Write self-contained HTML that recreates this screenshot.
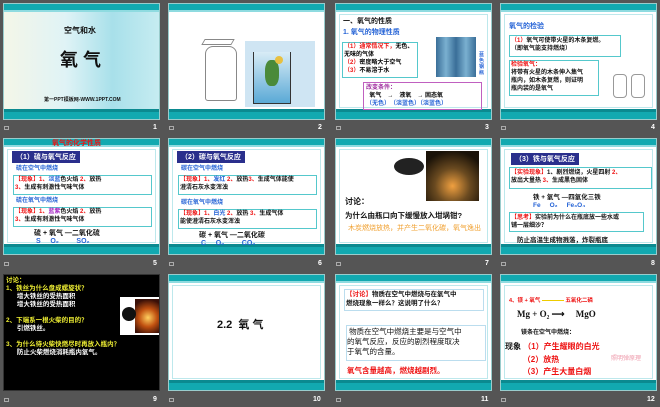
<!DOCTYPE html>
<html><head><meta charset="utf-8"><style>
*{margin:0;padding:0;box-sizing:border-box}
body{width:660px;height:407px;background:#555;position:relative;overflow:hidden;font-family:"Liberation Sans","Noto Sans CJK SC",sans-serif}
.s{position:absolute;width:157px;height:117px;background:#fff;overflow:hidden;border:1px solid #9cc}
.tb{position:absolute;left:0;right:0;top:0;height:8px;background:#12a9b0;border-bottom:2px solid #8fdbe0}
.bb{position:absolute;left:0;right:0;bottom:0;height:10px;background:#12a9b0;border-top:3px solid #0b8a90}
.in{position:absolute;left:3px;right:3px;top:10px;bottom:11px;border:1px solid #bde8ec}
.n{position:absolute;color:#fff;font-size:7px;font-weight:bold}
.ic{position:absolute;width:5px;height:4px;border:1px solid #aaa}
.t{position:absolute;font-size:7px;line-height:9px;font-weight:bold;white-space:nowrap}
.bx{position:absolute;border:1px solid #55c8cc}
.r{color:#e11}.b{color:#2563d6}.k{color:#111}
.hd{position:absolute;background:#2a2f8c;color:#fff;font-size:7px;font-weight:bold;padding:1px 4px}
</style></head><body>

<!-- slide 1 -->
<div class="s" style="left:3px;top:3px;background:linear-gradient(90deg,#f4f6e8,#dff3f6 40%,#a8e0ea 70%,#c6ecf1)">
<div class="tb"></div><div class="bb"></div>
<div class="t k" style="left:60px;top:22px;font-size:8px">空气和水</div>
<div class="t k" style="left:56px;top:46px;font-size:18px;line-height:20px">氧 气</div>
<div class="t k" style="left:40px;top:92px;font-size:5px">第一PPT模板网-WWW.1PPT.COM</div>
</div>
<div class="ic" style="left:4px;top:126px"></div><div class="n" style="left:153px;top:124px">1</div>

<!-- slide 2 -->
<div class="s" style="left:168px;top:3px">
<div class="tb"></div><div class="bb"></div>
<div style="position:absolute;left:36px;top:42px;width:32px;height:55px;border:1px solid #888;border-radius:8px 8px 3px 3px"></div>
<div style="position:absolute;left:34px;top:35px;width:30px;height:6px;border:1px solid #888;transform:skewX(-30deg)"></div>
<div style="position:absolute;left:76px;top:37px;width:70px;height:66px;background:#cfe5f3"></div>
<div style="position:absolute;left:84px;top:48px;width:38px;height:52px;background:linear-gradient(#d8ecf6,#5aa9d6);border:1px solid #333;border-top:none"></div>
<div style="position:absolute;left:96px;top:56px;width:14px;height:26px;background:#4a8a3a;border-radius:40%"></div>
<div style="position:absolute;left:106px;top:52px;width:8px;height:8px;background:#e8c040;border-radius:50%"></div>
</div>
<div class="ic" style="left:169px;top:126px"></div><div class="n" style="left:318px;top:124px">2</div>

<!-- slide 3 -->
<div class="s" style="left:335px;top:3px">
<div class="tb"></div><div class="bb"></div><div class="in"></div>
<div class="t k" style="left:7px;top:13px">一、氧气的性质</div>
<div class="t b" style="left:7px;top:24px">1. 氧气的物理性质</div>
<div class="bx" style="left:6px;top:38px;width:76px;height:36px"></div>
<div class="t" style="left:8px;top:39px;font-size:6px;line-height:8px"><span class="r">（1）通常情况下，</span>无色、<br>无味的气体<br><span class="r">（2）</span>密度略大于空气<br><span class="r">（3）</span>不易溶于水</div>
<div style="position:absolute;left:100px;top:33px;width:40px;height:40px;background:linear-gradient(90deg,#3a6e98,#7ab0d0,#3a6e98,#7ab0d0,#3a6e98)"></div>
<div class="t b" style="left:143px;top:48px;font-size:5px;line-height:6px">蓝<br>色<br>钢<br>瓶</div>
<div class="bx" style="left:27px;top:78px;width:119px;height:28px;border-color:#c060c0"></div>
<div class="t" style="left:30px;top:80px;font-size:6px;line-height:8px"><span style="color:#a030a0">改变条件：</span><br>&nbsp;&nbsp;氧气　→　液氧　→ 固态氧<br><span class="b">（无色）　（淡蓝色）（淡蓝色）</span></div>
</div>
<div class="ic" style="left:336px;top:126px"></div><div class="n" style="left:485px;top:124px">3</div>

<!-- slide 4 -->
<div class="s" style="left:500px;top:3px">
<div class="tb"></div><div class="bb"></div><div class="in"></div>
<div class="t b" style="left:8px;top:18px;font-size:7px">氧气的检验</div>
<div class="bx" style="left:8px;top:31px;width:112px;height:22px"></div>
<div class="t k" style="left:10px;top:33px;font-size:6px;line-height:8px"><span class="r">（1）</span>氧气可使带火星的木条复燃。<br>（即氧气能支持燃烧）</div>
<div class="bx" style="left:8px;top:56px;width:90px;height:36px"></div>
<div class="t k" style="left:10px;top:57px;font-size:6px;line-height:8px"><span class="r">检验氧气：</span><br>将带有火星的木条伸入集气<br>瓶内，如木条复燃，则证明<br>瓶内装的是氧气</div>
<div style="position:absolute;left:112px;top:70px;width:14px;height:24px;border:1px solid #999;border-radius:4px"></div>
<div style="position:absolute;left:130px;top:70px;width:14px;height:24px;border:1px solid #999;border-radius:4px"></div>
</div>
<div class="ic" style="left:501px;top:126px"></div><div class="n" style="left:651px;top:124px">4</div>

<!-- slide 5 -->
<div class="s" style="left:3px;top:138px">
<div class="tb"></div><div class="bb"></div><div class="in"></div>
<div class="t r" style="left:48px;top:0px;font-size:7px">氧气的化学性质</div>
<div class="hd" style="left:8px;top:12px">（1）硫与氧气反应</div>
<div class="t b" style="left:12px;top:26px;font-size:6px">硫在空气中燃烧</div>
<div class="bx" style="left:9px;top:36px;width:139px;height:20px"></div>
<div class="t k" style="left:11px;top:37px;font-size:6px;line-height:8px"><span class="r">【现象】1、</span><span class="b">淡蓝</span>色火焰 <span class="r">2、</span>放热<br><span class="r">3、</span>生成有刺激性气味气体</div>
<div class="t b" style="left:12px;top:58px;font-size:6px">硫在氧气中燃烧</div>
<div class="bx" style="left:9px;top:68px;width:139px;height:20px"></div>
<div class="t k" style="left:11px;top:69px;font-size:6px;line-height:8px"><span class="r">【现象】1、</span><span style="color:#a020c0">蓝紫</span>色火焰 <span class="r">2、</span>放热<br><span class="r">3、</span>生成有刺激性气味气体</div>
<div class="t k" style="left:30px;top:91px;font-size:7px;line-height:8px">硫 + 氧气 ―二氧化硫<br><span class="b">&nbsp;S&nbsp;&nbsp;&nbsp;&nbsp;&nbsp;O₂&nbsp;&nbsp;&nbsp;&nbsp;&nbsp;&nbsp;&nbsp;&nbsp;&nbsp;SO₂</span></div>
</div>
<div class="ic" style="left:4px;top:262px"></div><div class="n" style="left:153px;top:260px">5</div>

<!-- slide 6 -->
<div class="s" style="left:168px;top:138px">
<div class="tb"></div><div class="bb"></div><div class="in"></div>
<div class="hd" style="left:8px;top:12px">（2）碳与氧气反应</div>
<div class="t b" style="left:12px;top:26px;font-size:6px">碳在空气中燃烧</div>
<div class="bx" style="left:9px;top:36px;width:139px;height:20px"></div>
<div class="t k" style="left:11px;top:37px;font-size:6px;line-height:8px"><span class="r">【现象】1、</span><span class="b">发红</span> <span class="r">2、</span>放热<span class="r">3、</span>生成气体能使<br>澄清石灰水变浑浊</div>
<div class="t b" style="left:12px;top:60px;font-size:6px">碳在氧气中燃烧</div>
<div class="bx" style="left:9px;top:70px;width:139px;height:20px"></div>
<div class="t k" style="left:11px;top:71px;font-size:6px;line-height:8px"><span class="r">【现象】1、</span><span class="b">白光</span> <span class="r">2、</span>放热 <span class="r">3、</span>生成气体<br>能使澄清石灰水变浑浊</div>
<div class="t k" style="left:30px;top:93px;font-size:7px;line-height:8px">碳 + 氧气 ―二氧化碳<br><span class="b">&nbsp;C&nbsp;&nbsp;&nbsp;&nbsp;&nbsp;O₂&nbsp;&nbsp;&nbsp;&nbsp;&nbsp;&nbsp;&nbsp;&nbsp;&nbsp;CO₂</span></div>
</div>
<div class="ic" style="left:169px;top:262px"></div><div class="n" style="left:318px;top:260px">6</div>

<!-- slide 7 -->
<div class="s" style="left:335px;top:138px">
<div class="tb"></div><div class="bb"></div><div class="in"></div>
<div style="position:absolute;left:58px;top:19px;width:30px;height:17px;border-radius:50%;background:#222"></div>
<div style="position:absolute;left:90px;top:12px;width:53px;height:50px;background:radial-gradient(circle at 50% 70%,#f0a040,#6a4a20 40%,#1a1208 80%)"></div>
<div class="t k" style="left:9px;top:58px;font-size:8px">讨论：</div>
<div class="t k" style="left:9px;top:72px;font-size:7.5px">为什么由瓶口向下缓慢放入坩埚钳?</div>
<div class="t" style="left:12px;top:85px;font-size:7px;color:#f0a030;font-weight:normal">木炭燃烧放热，并产生二氧化碳，氧气逸出</div>
</div>
<div class="ic" style="left:336px;top:262px"></div><div class="n" style="left:485px;top:260px">7</div>

<!-- slide 8 -->
<div class="s" style="left:500px;top:138px">
<div class="tb"></div><div class="bb"></div><div class="in"></div>
<div class="hd" style="left:10px;top:14px">（3）铁与氧气反应</div>
<div class="bx" style="left:8px;top:28px;width:143px;height:22px"></div>
<div class="t k" style="left:10px;top:30px;font-size:6px;line-height:8px"><span class="r">【实验现象】</span>1、剧烈燃烧，火星四射 <span class="r">2、</span><br>放出大量热 <span class="r">3、</span>生成黑色固体</div>
<div class="t k" style="left:32px;top:55px;font-size:6.5px;line-height:8px">铁 + 氧气 ―四氧化三铁<br><span class="b">Fe&nbsp;&nbsp;&nbsp;&nbsp;&nbsp;O₂&nbsp;&nbsp;&nbsp;&nbsp;&nbsp;Fe₃O₄</span></div>
<div class="bx" style="left:8px;top:73px;width:135px;height:20px"></div>
<div class="t k" style="left:10px;top:75px;font-size:6px;line-height:8px"><span class="r">【思考】</span>实验前为什么在瓶底放一些水或<br>铺一层细沙？</div>
<div class="t k" style="left:16px;top:97px;font-size:6.5px">防止高温生成物溅落，炸裂瓶底</div>
</div>
<div class="ic" style="left:501px;top:262px"></div><div class="n" style="left:651px;top:260px">8</div>

<!-- slide 9 -->
<div class="s" style="left:3px;top:274px;background:#000;border-color:#333">
<div class="t" style="left:2px;top:2px;font-size:6.5px;line-height:8px;color:#ee3"><span>讨论：</span><br>1、铁丝为什么盘成螺旋状？<br><span style="color:#fff">&nbsp;&nbsp;&nbsp;&nbsp;&nbsp;&nbsp;增大铁丝的受热面积<br>&nbsp;&nbsp;&nbsp;&nbsp;&nbsp;&nbsp;增大铁丝的受热面积</span><br><br>2、下端系一根火柴的目的？<br><span style="color:#fff">&nbsp;&nbsp;&nbsp;&nbsp;&nbsp;&nbsp;引燃铁丝。</span><br><br>3、为什么待火柴快燃尽时再放入瓶内？<br><span style="color:#fff">&nbsp;&nbsp;&nbsp;&nbsp;&nbsp;&nbsp;防止火柴燃烧消耗瓶内氧气。</span></div>
<div style="position:absolute;left:116px;top:22px;width:43px;height:38px;background:#fff"></div>
<div style="position:absolute;left:131px;top:24px;width:26px;height:34px;background:radial-gradient(circle at 50% 55%,#ffd060,#c05010 40%,#3a1008 80%)"></div>
<div style="position:absolute;left:118px;top:32px;width:14px;height:14px;border-radius:50%;background:#111"></div>
</div>
<div class="ic" style="left:4px;top:398px"></div><div class="n" style="left:153px;top:396px">9</div>

<!-- slide 10 -->
<div class="s" style="left:168px;top:274px">
<div class="tb"></div><div class="bb"></div><div class="in"></div>
<div class="t k" style="left:48px;top:44px;font-size:11px;line-height:13px">2.2 &nbsp;氧 气</div>
</div>
<div class="ic" style="left:169px;top:398px"></div><div class="n" style="left:313px;top:396px">10</div>

<!-- slide 11 -->
<div class="s" style="left:335px;top:274px">
<div class="tb"></div><div class="bb"></div><div class="in"></div>
<div class="bx" style="left:8px;top:14px;width:140px;height:22px;border-color:#bde"></div>
<div class="t k" style="left:10px;top:15px;font-size:6.5px;line-height:9px"><span class="r">【讨论】</span>物质在空气中燃烧与在氧气中<br>燃烧现象一样么？这说明了什么？</div>
<div class="bx" style="left:10px;top:50px;width:140px;height:36px;border-color:#bde"></div>
<div class="t k" style="left:11px;top:52px;font-size:7.5px;line-height:10px;font-weight:normal">&nbsp;物质在空气中燃烧主要是与空气中<br>的氧气反应，反应的剧烈程度取决<br>于氧气的含量。</div>
<div class="t r" style="left:11px;top:91px;font-size:7.5px">氧气含量越高，燃烧越剧烈。</div>
</div>
<div class="ic" style="left:336px;top:398px"></div><div class="n" style="left:481px;top:396px">11</div>

<!-- slide 12 -->
<div class="s" style="left:500px;top:274px">
<div class="tb"></div><div class="bb"></div><div class="in"></div>
<div class="t r" style="left:8px;top:22px;font-size:5.5px">4、镁 + 氧气 <span style="display:inline-block;width:22px;border-top:1px solid #ec0;vertical-align:middle"></span> 五氧化二磷</div>
<div class="t k" style="left:16px;top:35px;font-size:9px;font-family:'Liberation Serif',serif">Mg + O₂ ⟶&nbsp;&nbsp;&nbsp;&nbsp;&nbsp;MgO</div>
<div class="t k" style="left:20px;top:54px;font-size:6px">镁条在空气中燃烧：</div>
<div class="t k" style="left:4px;top:66px;font-size:8px;line-height:12.5px">现象 <span class="r">（1）产生耀眼的白光</span><br>&nbsp;&nbsp;&nbsp;&nbsp;&nbsp;&nbsp;&nbsp;&nbsp;<span class="r">（2）放热</span><br>&nbsp;&nbsp;&nbsp;&nbsp;&nbsp;&nbsp;&nbsp;&nbsp;<span class="r">（3）产生大量白烟</span></div>
<div class="t" style="left:110px;top:80px;font-size:6px;color:#e9a;font-weight:normal">照明弹原理</div>
</div>
<div class="ic" style="left:501px;top:398px"></div><div class="n" style="left:647px;top:396px">12</div>

</body></html>
